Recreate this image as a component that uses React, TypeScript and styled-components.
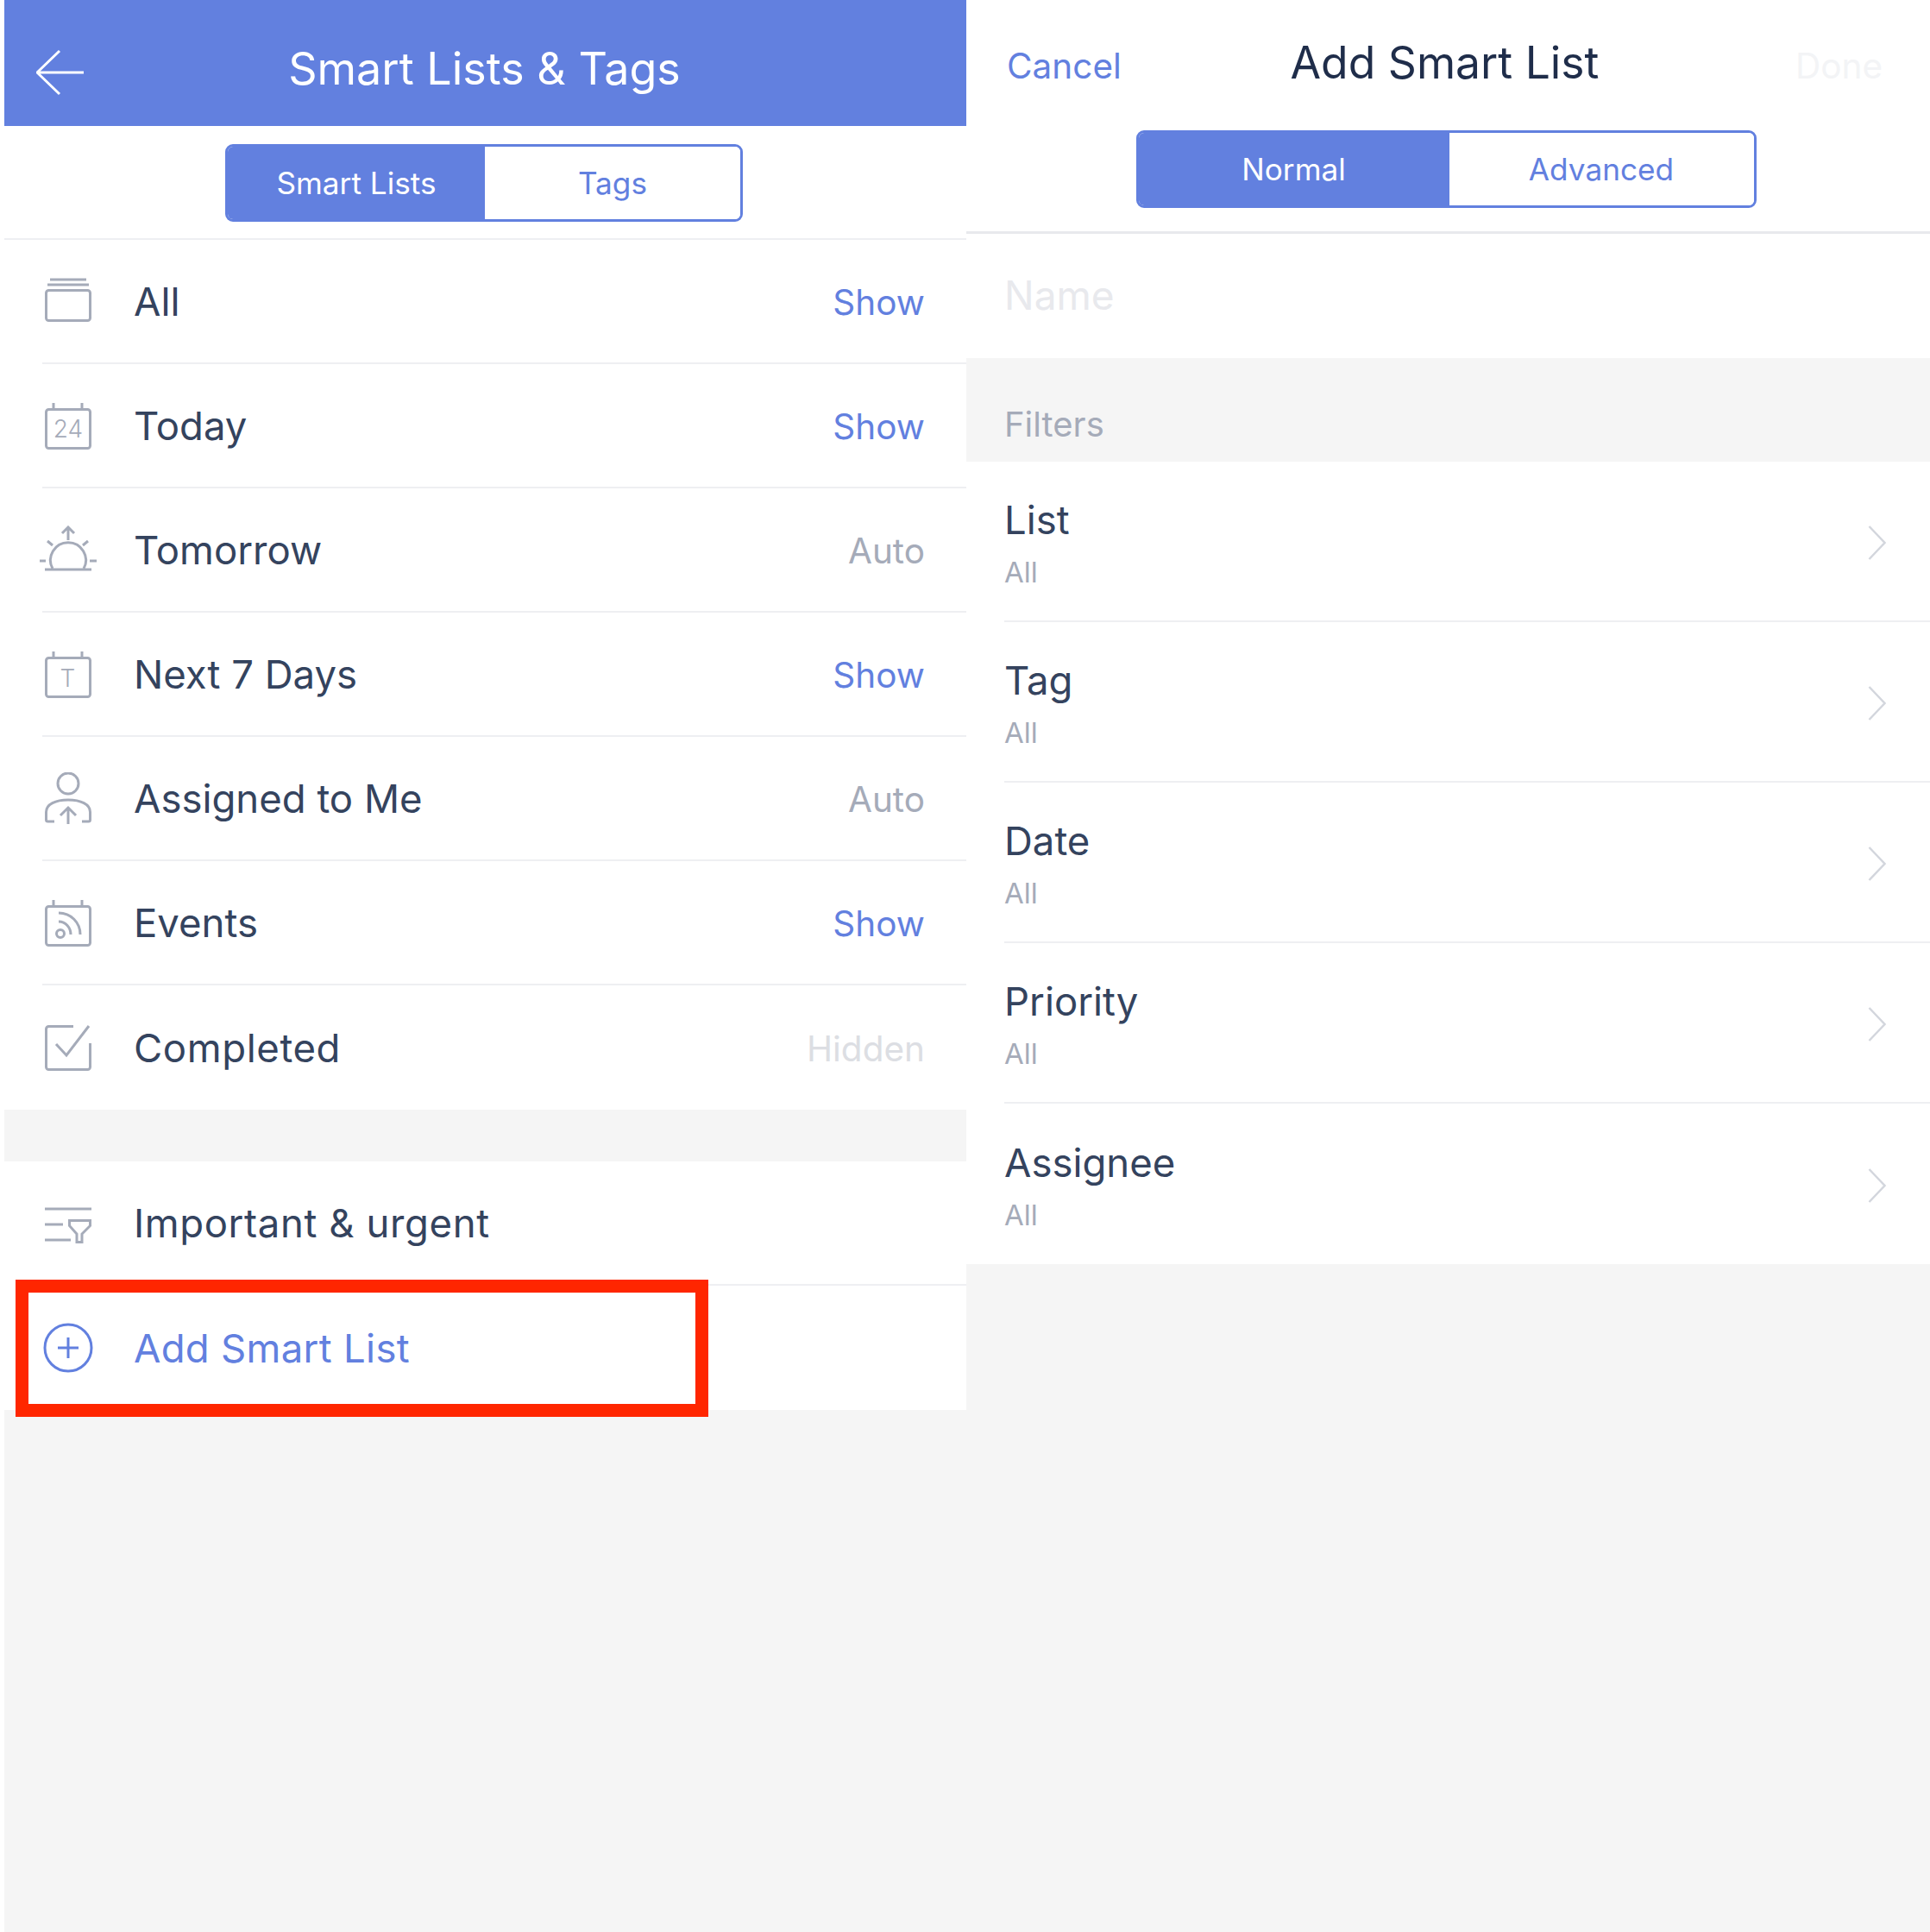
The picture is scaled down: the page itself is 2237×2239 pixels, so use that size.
import React from "react";
import styled, { createGlobalStyle } from "styled-components";

const BLUE = "#6280df";
const INK = "#34435e";
const ICON = "#a5abb9";

const Global = createGlobalStyle`
  html, body { margin: 0; padding: 0; background: #fff; }
  * { box-sizing: border-box; }
  body { font-family: Inter, "Liberation Sans", sans-serif; }
`;

const Page = styled.div`
  display: flex;
  width: 2237px;
  height: 2239px;
  overflow: hidden;
`;
const LeftPanel = styled.div`
  width: 1120px;
  padding-left: 5px;
  display: flex;
  flex-direction: column;
  background: #fff;
`;
const RightPanel = styled.div`
  width: 1117px;
  display: flex;
  flex-direction: column;
  background: #f5f5f5;
`;
const BlueBar = styled.header`
  height: 146px;
  flex: none;
  background: ${BLUE};
  position: relative;
  display: flex;
  align-items: center;
  justify-content: center;
  padding: 12px 2px 0 0;
`;
const BackIcon = styled.svg`
  position: absolute;
  left: 37px;
  top: 57px;
`;
const BlueTitle = styled.h1`
  margin: 0;
  font-size: 52px;
  font-weight: 400;
  color: #fff;
`;
const SegmentBar = styled.div<{ $h: number; $pad: number; $shift: number }>`
  height: ${(p) => p.$h}px;
  flex: none;
  background: #fff;
  display: flex;
  justify-content: center;
  padding-top: ${(p) => p.$pad}px;
  padding-right: ${(p) => p.$shift}px;
`;
const Segment = styled.div<{ $w: number; $first: number }>`
  width: ${(p) => p.$w}px;
  height: 90px;
  display: grid;
  grid-template-columns: ${(p) => p.$first}px 1fr;
  border: 3px solid ${BLUE};
  border-radius: 9px;
  overflow: hidden;
`;
const SegmentItem = styled.div<{ $on?: boolean }>`
  display: flex;
  align-items: center;
  justify-content: center;
  font-size: 35.2px;
  background: ${(p) => (p.$on ? BLUE : "#fff")};
  color: ${(p) => (p.$on ? "#fff" : BLUE)};
`;
const Rows = styled.div`
  background: #fff;
  flex: none;
  border-top: 2px solid #eeeff2;
`;
const PlainRows = styled(Rows)`
  border-top: none;
`;
const Row = styled.div`
  height: 144px;
  margin-left: 44px;
  padding: 0 48px 0 0;
  display: flex;
  align-items: center;
  position: relative;
  border-bottom: 2px solid #eeeff2;
  &:last-child { border-bottom: none; }
`;
const IconSlot = styled.div`
  width: 106px;
  padding-left: 3px;
  flex: none;
  display: flex;
  align-items: center;
`;
const RowLabel = styled.span<{ $blue?: boolean; $track?: number }>`
  flex: 1;
  font-size: 45.5px;
  letter-spacing: ${(p) => p.$track ?? 0}px;
  color: ${(p) => (p.$blue ? BLUE : INK)};
`;
const RowState = styled.span<{ $kind: string }>`
  font-size: 40.5px;
  padding-top: 2px;
  color: ${(p) =>
    p.$kind === "Show" ? BLUE : p.$kind === "Auto" ? "#a5abb9" : "#dcdee3"};
`;
const Gap = styled.div`
  height: 60px;
  flex: none;
  background: #f5f5f5;
`;
const Fill = styled.div`
  flex: 1;
  background: #f5f5f5;
`;
const Highlight = styled.div`
  position: absolute;
  left: -31px;
  top: -7px;
  width: 803px;
  height: 159px;
  border: 15px solid #ff2600;
  pointer-events: none;
`;
const NavBar = styled.div`
  height: 151px;
  flex: none;
  background: #fff;
  padding: 0 55px 0 47px;
  display: grid;
  grid-template-columns: 1fr auto 1fr;
  align-items: start;
`;
const NavAction = styled.span<{ $off?: boolean }>`
  font-size: 40.5px;
  padding-top: 52px;
  text-align: ${(p) => (p.$off ? "right" : "left")};
  color: ${(p) => (p.$off ? "#f3f4f6" : BLUE)};
`;
const NavTitle = styled.h2`
  margin: 0;
  padding-top: 41px;
  font-size: 51.6px;
  font-weight: 400;
  color: #1f2d4a;
`;
const ThickLine = styled.div`
  height: 3px;
  flex: none;
  background: #e8e9ed;
`;
const NameRow = styled.div`
  height: 144px;
  flex: none;
  background: #fff;
  display: flex;
  align-items: center;
  padding: 0 0 2px 44px;
  font-size: 46px;
  color: #e8e9ed;
`;
const SectionHead = styled.div`
  height: 120px;
  flex: none;
  padding: 0 0 19px 44px;
  display: flex;
  align-items: flex-end;
  font-size: 40px;
  color: #a5abb9;
`;
const FilterRow = styled.div`
  height: 186px;
  margin-left: 44px;
  padding-right: 50px;
  display: flex;
  align-items: center;
  justify-content: space-between;
  border-bottom: 2px solid #eeeff2;
  &:last-child { border-bottom: none; }
`;
const FilterText = styled.div`
  display: flex;
  flex-direction: column;
  gap: 12px;
  padding-top: 4px;
`;
const FilterName = styled.span`
  font-size: 45.5px;
  line-height: 56px;
  color: ${INK};
`;
const FilterValue = styled.span`
  font-size: 33px;
  line-height: 40px;
  color: #a5abb9;
`;
const Chevron = styled.svg`
  margin-top: 3px;
`;
const OffsetIcon = styled.svg<{ $dx: number }>`
  margin-left: ${(p) => p.$dx}px;
  flex: none;
`;

const stroke = { fill: "none", stroke: ICON, strokeWidth: 3 };

const AllIcon = () => (
  <svg width="56" height="56" viewBox="0 0 56 56" {...stroke}>
    <path d="M6 3h42M3 9h48" />
    <rect x="1.5" y="15.5" width="51" height="35" rx="3" />
  </svg>
);
const CalFrame = ({ children }: { children?: React.ReactNode }) => (
  <svg width="56" height="56" viewBox="0 0 56 56" {...stroke}>
    <path d="M10 2v7M43 2v7" />
    <rect x="1.5" y="9.5" width="51" height="45" rx="3" />
    {children}
  </svg>
);
const CalText = styled.text`
  font-family: Inter, sans-serif;
  font-size: 28px;
  font-weight: 300;
  fill: ${ICON};
  stroke: none;
  text-anchor: middle;
`;
const TodayIcon = () => (
  <CalFrame>
    <CalText x="27" y="42">24</CalText>
  </CalFrame>
);
const NextIcon = () => (
  <CalFrame>
    <CalText x="26.5" y="43">T</CalText>
  </CalFrame>
);
const EventsIcon = () => (
  <CalFrame>
    <circle cx="18" cy="41" r="4.5" />
    <path d="M16 27c8 0 14 7 14 15M16 17c14 0 25 11 25 25" />
  </CalFrame>
);
const SunIcon = () => (
  <OffsetIcon $dx={-6} width="70" height="56" viewBox="0 0 70 56" {...stroke}>
    <path d="M33 17V2M26 9l7-7 7 7" />
    <path d="M9 18l6 5M56 18l-6 5M0 41h7M58 41h8" />
    <path d="M6 51h54" />
    <path d="M15 50A20.5 20.5 0 1 1 51 50" />
  </OffsetIcon>
);
const PersonIcon = () => (
  <svg width="56" height="60" viewBox="0 0 56 60" {...stroke}>
    <circle cx="27" cy="13" r="12" />
    <path d="M1.5 46c0-9 11-14 25.5-14s25.5 5 25.5 14" />
    <path d="M1.5 46v9a2 2 0 0 0 2 2H11M52.5 46v9a2 2 0 0 1-2 2H43" />
    <path d="M27 60V41M18 50l9-9 9 9" />
  </svg>
);
const CheckIcon = () => (
  <svg width="56" height="56" viewBox="0 0 56 56" {...stroke}>
    <path d="M33 3.5H4.5a3 3 0 0 0-3 3v44a3 3 0 0 0 3 3h45a3 3 0 0 0 3-3V23" />
    <path d="M13 24l12 13L51 3" />
  </svg>
);
const FilterIcon = () => (
  <svg width="56" height="56" viewBox="0 0 56 56" {...stroke}>
    <path d="M0 12h54M0 30h21M0 48h30" />
    <path d="M28.5 25.5h24v6L43 41v9.5h-6V41l-8.500-9.500z" />
  </svg>
);
const PlusIcon = () => (
  <OffsetIcon $dx={-2} width="58" height="58" viewBox="0 0 58 58" fill="none" stroke={BLUE} strokeWidth="3">
    <circle cx="29" cy="29" r="27" />
    <path d="M29 17v24M17 29h24" />
  </OffsetIcon>
);

const lists = [
  { icon: <AllIcon />, label: "All", state: "Show" },
  { icon: <TodayIcon />, label: "Today", state: "Show" },
  { icon: <SunIcon />, label: "Tomorrow", state: "Auto" },
  { icon: <NextIcon />, label: "Next 7 Days", state: "Show" },
  { icon: <PersonIcon />, label: "Assigned to Me", state: "Auto" },
  { icon: <EventsIcon />, label: "Events", state: "Show" },
  { icon: <CheckIcon />, label: "Completed", state: "Hidden", track: 0.6 },
];
const filters = ["List", "Tag", "Date", "Priority", "Assignee"];

export default function App() {
  return (
    <Page>
      <Global />
      <LeftPanel>
        <BlueBar>
          <BackIcon width="58" height="54" viewBox="0 0 58 54" fill="none" stroke="#fff" strokeWidth="3">
            <path d="M27 2 1 27l26 25M1 27h54" />
          </BackIcon>
          <BlueTitle>Smart Lists &amp; Tags</BlueTitle>
        </BlueBar>
        <SegmentBar $h={130} $pad={21} $shift={3}>
          <Segment $w={600} $first={298}>
            <SegmentItem $on>Smart Lists</SegmentItem>
            <SegmentItem>Tags</SegmentItem>
          </Segment>
        </SegmentBar>
        <Rows>
          {lists.map((l) => (
            <Row key={l.label}>
              <IconSlot>{l.icon}</IconSlot>
              <RowLabel $track={l.track}>{l.label}</RowLabel>
              <RowState $kind={l.state}>{l.state}</RowState>
            </Row>
          ))}
        </Rows>
        <Gap />
        <PlainRows>
          <Row>
            <IconSlot><FilterIcon /></IconSlot>
            <RowLabel $track={0.6}>Important &amp; urgent</RowLabel>
          </Row>
          <Row>
            <IconSlot><PlusIcon /></IconSlot>
            <RowLabel $blue $track={0.3}>Add Smart List</RowLabel>
            <Highlight />
          </Row>
        </PlainRows>
        <Fill />
      </LeftPanel>
      <RightPanel>
        <NavBar>
          <NavAction>Cancel</NavAction>
          <NavTitle>Add Smart List</NavTitle>
          <NavAction $off>Done</NavAction>
        </NavBar>
        <SegmentBar $h={117} $pad={0} $shift={5}>
          <Segment $w={719} $first={360}>
            <SegmentItem $on>Normal</SegmentItem>
            <SegmentItem>Advanced</SegmentItem>
          </Segment>
        </SegmentBar>
        <ThickLine />
        <NameRow>Name</NameRow>
        <SectionHead>Filters</SectionHead>
        <PlainRows>
          {filters.map((f) => (
            <FilterRow key={f}>
              <FilterText>
                <FilterName>{f}</FilterName>
                <FilterValue>All</FilterValue>
              </FilterText>
              <Chevron width="22" height="40" viewBox="0 0 22 40" fill="none" stroke="#d3d6dd" strokeWidth="2.5">
                <path d="M1.5 1l18 19-18 19" />
              </Chevron>
            </FilterRow>
          ))}
        </PlainRows>
      </RightPanel>
    </Page>
  );
}
